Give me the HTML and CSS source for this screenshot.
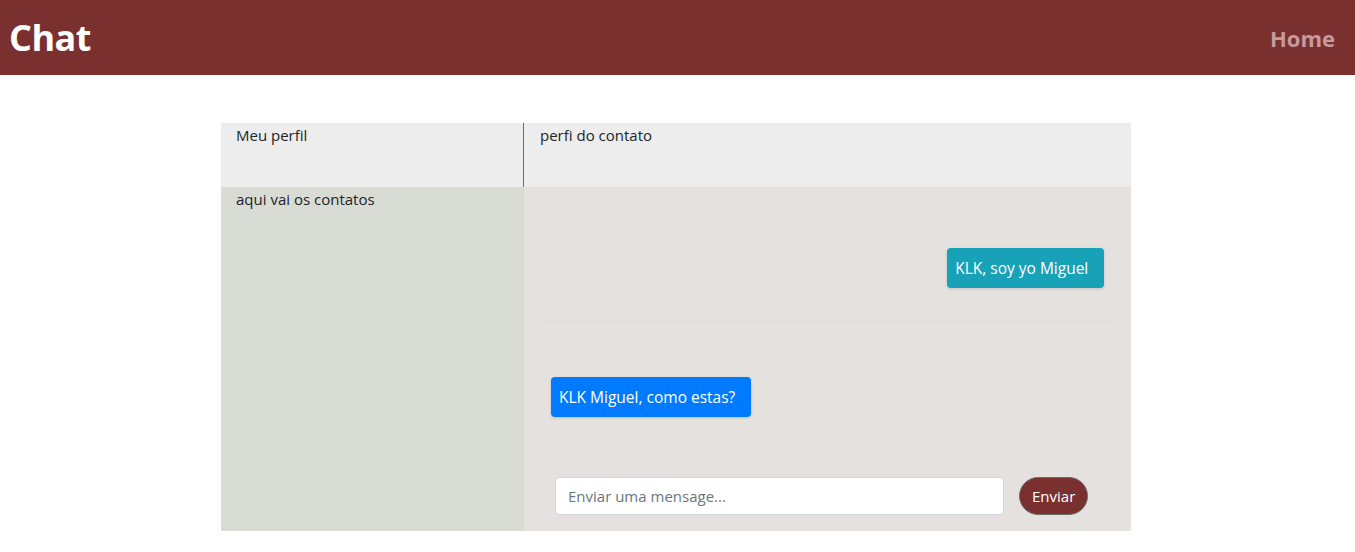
FILE: index.html
```html
<!DOCTYPE html>
<html lang="pt">
<head>
<meta charset="utf-8">
<title>Chat</title>
<link rel="stylesheet" href="styles.css">
</head>
<body>
<header class="topbar">
  <h1 class="brand">Chat</h1>
  <a class="nav-link" href="#">Home</a>
</header>
<main class="chat">
  <div class="profile">Meu perfil</div>
  <div class="contact-profile">perfi do contato</div>
  <div class="contacts">aqui vai os contatos</div>
  <div class="conversation">
    <div class="messages">
      <div class="row row-right"><div class="bubble bubble-teal">KLK, soy yo Miguel</div></div>
      <div class="divider"></div>
      <div class="row row-left"><div class="bubble bubble-blue">KLK Miguel, como estas?</div></div>
    </div>
    <form class="composer">
      <input class="composer-input" type="text" placeholder="Enviar uma mensage...">
      <button class="composer-btn" type="button">Enviar</button>
    </form>
  </div>
</main>
</body>
</html>
```
FILE: styles.css
```css
* { box-sizing: border-box; }
body {
  margin: 0;
  font-family: "Open Sans", "Noto Sans", sans-serif;
  font-size: 15px;
  color: #212529;
  background: #fff;
}
.topbar {
  height: 75px;
  background: #7b3030;
  display: flex;
  align-items: center;
  justify-content: space-between;
  padding: 0 20px 0 9px;
}
.brand {
  margin: 0;
  color: #fff;
  font-size: 36px;
  font-weight: 700;
  letter-spacing: -0.5px;
}
.nav-link {
  color: #c69b9b;
  font-size: 22px;
  font-weight: 700;
  text-decoration: none;
}
.chat {
  width: 910px;
  margin: 48px 0 0 221px;
  display: grid;
  grid-template-columns: 303px 1fr;
  grid-template-rows: 64px 344px;
}
.profile {
  background: #ededed;
  border-right: 1px solid #6c6c6c;
  padding: 2px 15px;
}
.contact-profile {
  background: #ededed;
  padding: 2px 16px;
}
.contacts {
  background: #d9dbd5;
  padding: 2px 15px;
}
.conversation {
  background: #e5e1de;
  display: flex;
  flex-direction: column;
  padding: 0 27px 16px 27px;
}
.messages {
  flex: 1;
  display: flex;
  flex-direction: column;
}
.row { display: flex; }
.row-right {
  justify-content: flex-end;
  margin-top: 61px;
}
.divider {
  height: 3px;
  background: #dfdfe0;
  margin: 31px -8px 0 -10px;
}
.row-left {
  justify-content: flex-start;
  margin-top: 55px;
}
.bubble {
  height: 40px;
  line-height: 40px;
  padding: 0 16px 0 8px;
  border-radius: 4px;
  color: #fff;
  font-size: 15.5px;
  box-shadow: 0 1px 3px rgba(0,0,0,0.15);
}
.bubble-teal { background: #17a2b8; }
.bubble-blue { background: #007bff; }
.composer {
  display: flex;
  align-items: center;
  gap: 15px;
  padding-left: 4px;
  padding-right: 16px;
}
.composer-input {
  width: 449px;
  height: 38px;
  border: 1px solid #ced4da;
  border-radius: 4px;
  padding: 0 12px;
  font-family: inherit;
  font-size: 15px;
  color: #495057;
  background: #fff;
}
.composer-input::placeholder { color: #6c757d; }
.composer-btn {
  height: 38px;
  padding: 0 12px;
  border-radius: 19px;
  border: 1px solid #6c6c6c;
  background: #7b3030;
  color: #fff;
  font-family: inherit;
  font-size: 15px;
}
```
